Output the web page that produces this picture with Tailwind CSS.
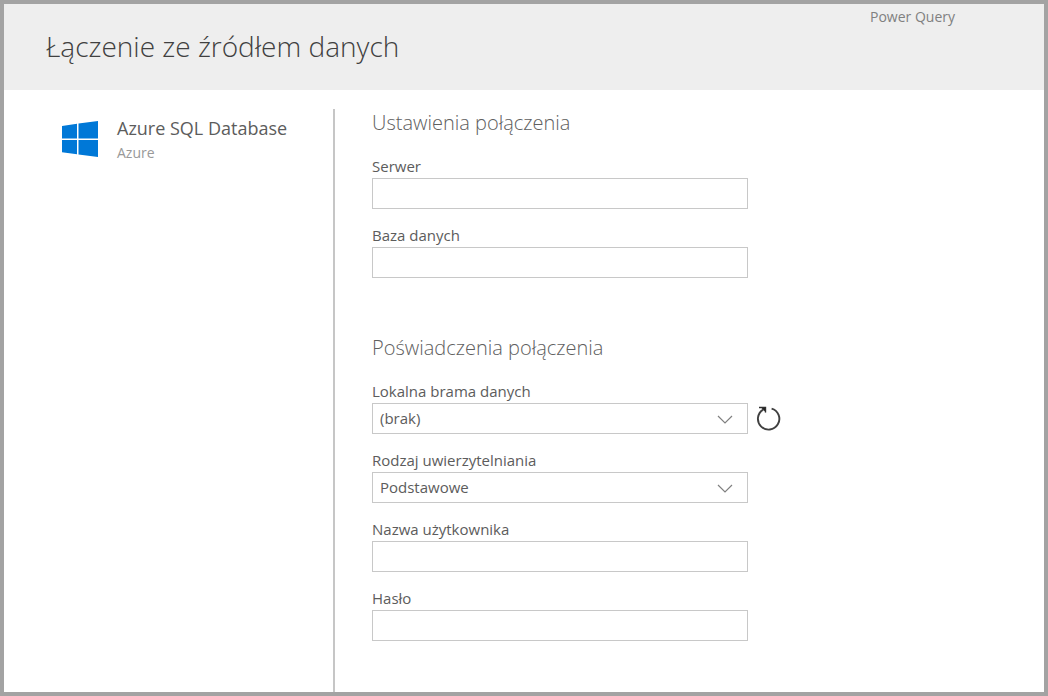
<!DOCTYPE html>
<html lang="pl">
<head>
<meta charset="utf-8">
<meta name="viewport" content="width=device-width, initial-scale=1">
<title>Power Query</title>
<script src="https://cdn.jsdelivr.net/npm/@tailwindcss/browser@4"></script>
</head>
<body class="flex min-h-screen flex-col border-4 border-[#a3a3a3] bg-white font-['Open_Sans','Noto_Sans',sans-serif] text-[15px] text-[#5c5c5c]">
  <header class="flex min-h-[86px] items-start justify-between bg-[#eeeeee] pl-[42px] pr-[89px]">
    <h1 class="pt-[22px] text-[28px] leading-10 font-light text-[#404040]">Łączenie ze źródłem danych</h1>
    <span class="pt-0.5 text-[14px] leading-[22px] text-[#808080]">Power Query</span>
  </header>
  <div class="flex flex-1 pt-[19px]">
    <aside class="flex w-[331px] shrink-0 items-start gap-[19px] border-r-2 border-[#c6c6c6] pl-[58px] pt-2">
      <svg class="mt-1 h-9 w-9 shrink-0" viewBox="0 0 36 36" fill="#0078d7" aria-hidden="true">
        <path d="M0 5 15 2.700V17.500H0ZM16.500 2.500 36 0V17.500H16.500ZM0 19H15V33.300L0 31.200ZM16.500 19H36V36L16.500 33.500Z"/>
      </svg>
      <div class="min-w-0">
        <h2 class="pb-0.5 text-[18px] leading-[22px] whitespace-nowrap text-[#5c5c5c]">Azure SQL Database</h2>
        <p class="text-[14px] leading-6 text-[#999999]">Azure</p>
      </div>
    </aside>
    <main class="flex min-w-0 flex-1 flex-col gap-[53px] pl-[37px] pb-8">
      <section>
        <h2 class="-mt-0.5 mb-[17px] text-[20px] leading-8 font-light text-[#606060]">Ustawienia połączenia</h2>
        <div class="flex max-w-[376px] flex-col gap-4">
          <div>
            <label for="server" class="block pb-0.5 leading-5">Serwer</label>
            <input id="server" type="text" class="block h-[31px] w-full border border-[#c8c8c8] px-[7px] outline-none">
          </div>
          <div>
            <label for="database" class="block pb-0.5 leading-5">Baza danych</label>
            <input id="database" type="text" class="block h-[31px] w-full border border-[#c8c8c8] px-[7px] outline-none">
          </div>
        </div>
      </section>
      <section>
        <h2 class="mt-px mb-[17px] text-[20px] leading-8 font-light text-[#606060]">Poświadczenia połączenia</h2>
        <div class="flex flex-col gap-4">
          <div>
            <label for="gateway" class="block pb-0.5 leading-5">Lokalna brama danych</label>
            <div class="flex items-center gap-2">
              <div class="grid w-full max-w-[376px] items-center">
                <select id="gateway" class="col-start-1 row-start-1 h-[31px] w-full appearance-none border border-[#c8c8c8] bg-white px-[7px] outline-none">
                  <option>(brak)</option>
                </select>
                <svg class="pointer-events-none col-start-1 row-start-1 mr-[15px] h-4 w-4 justify-self-end" viewBox="0 0 16 16" fill="none" stroke="#808080" stroke-width="1.200" aria-hidden="true"><path d="M1 5 8 12 15 5"/></svg>
              </div>
              <button type="button" aria-label="Odśwież" class="shrink-0">
                <svg class="h-[26px] w-[26px]" viewBox="0 0 26 26" fill="none" stroke="#404040" stroke-width="1.900" aria-hidden="true">
                  <path d="M15.600 2.600A10.700 10.700 0 1 1 7.300 3.600"/>
                  <path d="M4.500 1 10 1.300V6.500Z" fill="#202020" stroke="none"/>
                  <path d="M3 1.500H9.500V6.500" stroke="#303030" stroke-width="1.400"/>
                </svg>
              </button>
            </div>
          </div>
          <div class="max-w-[376px]">
            <label for="auth" class="block pb-0.5 leading-5">Rodzaj uwierzytelniania</label>
            <div class="grid items-center">
              <select id="auth" class="col-start-1 row-start-1 h-[31px] w-full appearance-none border border-[#c8c8c8] bg-white px-[7px] outline-none">
                <option>Podstawowe</option>
              </select>
              <svg class="pointer-events-none col-start-1 row-start-1 mr-[15px] h-4 w-4 justify-self-end" viewBox="0 0 16 16" fill="none" stroke="#808080" stroke-width="1.200" aria-hidden="true"><path d="M1 5 8 12 15 5"/></svg>
            </div>
          </div>
          <div class="max-w-[376px]">
            <label for="user" class="block pb-0.5 leading-5">Nazwa użytkownika</label>
            <input id="user" type="text" class="block h-[31px] w-full border border-[#c8c8c8] px-[7px] outline-none">
          </div>
          <div class="max-w-[376px]">
            <label for="password" class="block pb-0.5 leading-5">Hasło</label>
            <input id="password" type="password" class="block h-[31px] w-full border border-[#c8c8c8] px-[7px] outline-none">
          </div>
        </div>
      </section>
    </main>
  </div>
</body>
</html>
